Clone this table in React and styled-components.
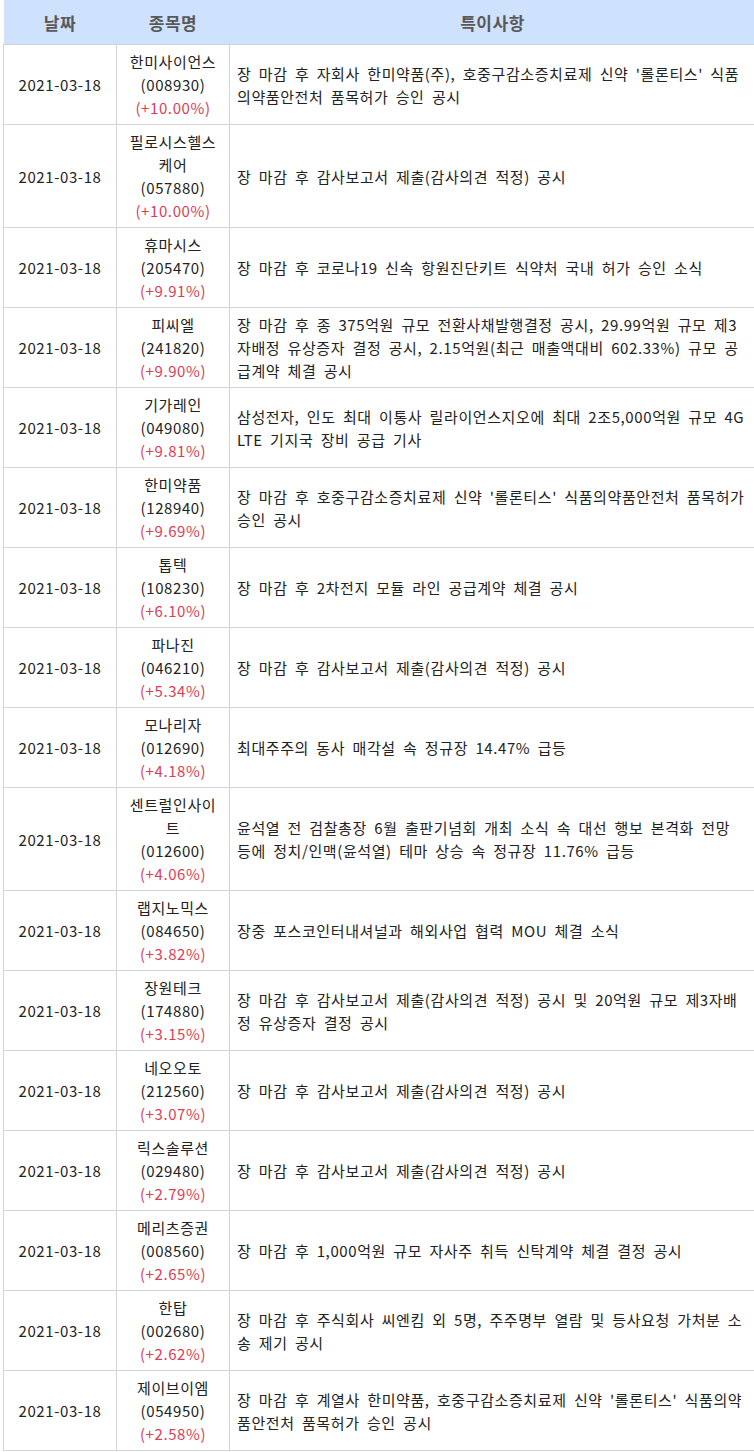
import React from 'react';
import styled, { createGlobalStyle } from 'styled-components';

const rows = [
  { name: '한미사이언스', code: '008930', rate: '+10.00%', note: "장 마감 후 자회사 한미약품(주), 호중구감소증치료제 신약 '롤론티스' 식품의약품안전처 품목허가 승인 공시" },
  { name: '필로시스헬스케어', code: '057880', rate: '+10.00%', note: '장 마감 후 감사보고서 제출(감사의견 적정) 공시' },
  { name: '휴마시스', code: '205470', rate: '+9.91%', note: '장 마감 후 코로나19 신속 항원진단키트 식약처 국내 허가 승인 소식' },
  { name: '피씨엘', code: '241820', rate: '+9.90%', note: '장 마감 후 종 375억원 규모 전환사채발행결정 공시, 29.99억원 규모 제3자배정 유상증자 결정 공시, 2.15억원(최근 매출액대비 602.33%) 규모 공급계약 체결 공시' },
  { name: '기가레인', code: '049080', rate: '+9.81%', note: '삼성전자, 인도 최대 이통사 릴라이언스지오에 최대 2조5,000억원 규모 4G LTE 기지국 장비 공급 기사' },
  { name: '한미약품', code: '128940', rate: '+9.69%', note: "장 마감 후 호중구감소증치료제 신약 '롤론티스' 식품의약품안전처 품목허가 승인 공시" },
  { name: '톱텍', code: '108230', rate: '+6.10%', note: '장 마감 후 2차전지 모듈 라인 공급계약 체결 공시' },
  { name: '파나진', code: '046210', rate: '+5.34%', note: '장 마감 후 감사보고서 제출(감사의견 적정) 공시' },
  { name: '모나리자', code: '012690', rate: '+4.18%', note: '최대주주의 동사 매각설 속 정규장 14.47% 급등' },
  { name: '센트럴인사이트', code: '012600', rate: '+4.06%', note: '윤석열 전 검찰총장 6월 출판기념회 개최 소식 속 대선 행보 본격화 전망 등에 정치/인맥(윤석열) 테마 상승 속 정규장 11.76% 급등' },
  { name: '랩지노믹스', code: '084650', rate: '+3.82%', note: '장중 포스코인터내셔널과 해외사업 협력 MOU 체결 소식' },
  { name: '장원테크', code: '174880', rate: '+3.15%', note: '장 마감 후 감사보고서 제출(감사의견 적정) 공시 및 20억원 규모 제3자배정 유상증자 결정 공시' },
  { name: '네오오토', code: '212560', rate: '+3.07%', note: '장 마감 후 감사보고서 제출(감사의견 적정) 공시' },
  { name: '릭스솔루션', code: '029480', rate: '+2.79%', note: '장 마감 후 감사보고서 제출(감사의견 적정) 공시' },
  { name: '메리츠증권', code: '008560', rate: '+2.65%', note: '장 마감 후 1,000억원 규모 자사주 취득 신탁계약 체결 결정 공시' },
  { name: '한탑', code: '002680', rate: '+2.62%', note: '장 마감 후 주식회사 씨엔킴 외 5명, 주주명부 열람 및 등사요청 가처분 소송 제기 공시' },
  { name: '제이브이엠', code: '054950', rate: '+2.58%', note: "장 마감 후 계열사 한미약품, 호중구감소증치료제 신약 '롤론티스' 식품의약품안전처 품목허가 승인 공시" },
];

const GlobalStyle = createGlobalStyle`
  body {
    margin: 0;
    background: #ffffff;
    font-family: "Noto Sans CJK KR", "Noto Sans", sans-serif;
    overflow: hidden;
  }
`;

const Wrap = styled.div`
  padding-left: 3px;
  width: 760px;
`;

const Table = styled.table`
  width: 753px;
  border-collapse: collapse;
  table-layout: fixed;
  font-size: 15px;
  line-height: 23px;
  letter-spacing: 0.6px;
  word-spacing: 3.4px;
  color: #222;
`;

const HeadCell = styled.th`
  height: 44px;
  padding: 0;
  background: #cfe2fd;
  color: #595959;
  font-size: 17px;
  font-weight: bold;
  letter-spacing: 0.5px;
  text-align: center;
  border: none;
  border-bottom: 1px solid #c9d3df;
  width: ${props => props.w || 'auto'};
`;

const Cell = styled.td`
  padding: 5px ${props => (props.left ? '7px' : '4px')};
  border: 1px solid #d4d4d4;
  text-align: ${props => (props.left ? 'left' : 'center')};
  vertical-align: middle;
  word-break: normal;
  line-break: anywhere;
`;

const NameCell = styled(Cell)`
  padding: 5px 8px;
`;

const Rate = styled.div`
  color: #dc3d55;
`;

export default function App() {
  return (
    <Wrap>
      <GlobalStyle />
      <Table>
        <thead>
          <tr>
            <HeadCell w="113px">날짜</HeadCell>
            <HeadCell w="113px">종목명</HeadCell>
            <HeadCell>특이사항</HeadCell>
          </tr>
        </thead>
        <tbody>
          {rows.map(r => (
            <tr key={r.code}>
              <Cell>2021-03-18</Cell>
              <NameCell>
                <div>{r.name}</div>
                <div>({r.code})</div>
                <Rate>({r.rate})</Rate>
              </NameCell>
              <Cell left>{r.note}</Cell>
            </tr>
          ))}
        </tbody>
      </Table>
    </Wrap>
  );
}
